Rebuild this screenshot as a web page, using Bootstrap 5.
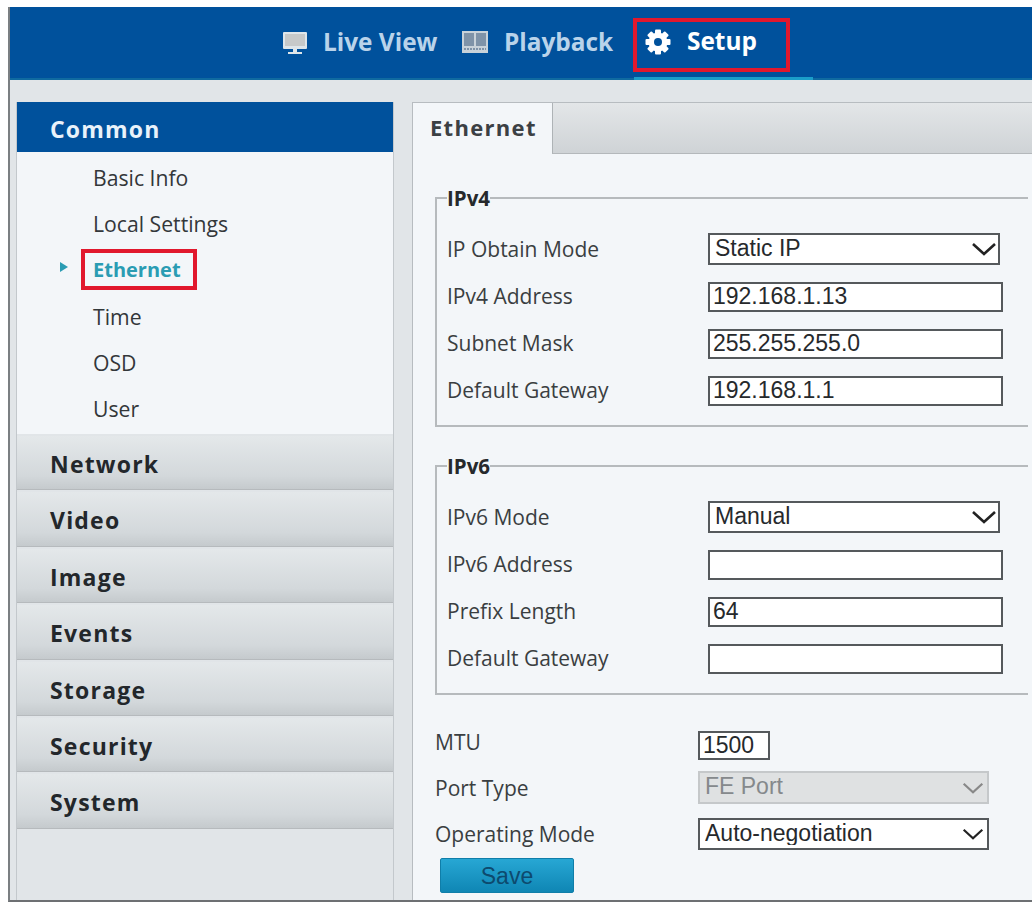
<!DOCTYPE html>
<html lang="en">
<head>
  <meta charset="UTF-8">
  <meta name="viewport" content="width=device-width, initial-scale=1">
  <title>Ethernet Setup</title>
  <link href="https://cdn.jsdelivr.net/npm/bootstrap@5.3.3/dist/css/bootstrap.min.css" rel="stylesheet">
  <style>
    html, body { height: 100%; background: #fff; overflow: hidden; }
    body { font-family: "Open Sans", "Noto Sans", sans-serif; color: #2b2f33; }
    .cam-frame { margin: 7px 0 0 8px; height: 895px; border-left: 2px solid #7b7f82; border-bottom: 2px solid #6d7073; background: #e1e5e8; overflow: hidden; }

    .cam-top { height: 73px; background: #00519c; padding-left: 270px; box-shadow: inset 0 -2px 0 #0f6aa0; }
    .cam-link { height: 73px; padding-bottom: 3px; font-size: 24.4px; font-weight: 700; color: #b9d3ea; text-decoration: none; }
    .cam-link:hover { color: #b9d3ea; }
    .cam-link svg { flex: none; }
    .cam-live { width: 182px; gap: 16px; padding-left: 3px; }
    .cam-live svg { margin-top: 1px; }
    .cam-play { width: 172px; gap: 16px; }
    .cam-setup { width: 179px; gap: 16px; padding-left: 11px; padding-bottom: 1px; color: #fff; border-bottom: 3px solid #1b9ec9; }
    .cam-setup:hover { color: #fff; }
    .cam-mark { position: absolute; border: 4px solid #e1182d; pointer-events: none; }
    .mark-setup { left: -1px; top: 11px; width: 157px; height: 54px; }
    .mark-eth { left: -12px; top: -6px; width: 116px; height: 41px; }

    .cam-body { padding: 22px 0 0 6px; gap: 18px; height: 820px; }
    .cam-side { width: 378px; flex: none; border-right: 1px solid #c3c8cc; border-left: 1px solid #c3c8cc; }
    .side-head { display: flex; align-items: center; padding-left: 33px; font-size: 23px; font-weight: 700; letter-spacing: 1.2px; color: #23272b; }
    .side-head.is-open { height: 50px; padding-top: 5px; background: #00519c; color: #e9f2fa; }
    .side-head.is-shut { height: 54.4px; padding-top: 3px; margin-top: 2px; background: linear-gradient(#e4e8ea, #d3d8db 75%, #c5cacd); border-bottom: 1px solid #b6babd; }
    .side-list { background: #f3f6f9; height: 282px; padding: 3px 0 0 76px; margin: 0; list-style: none; }
    .side-list li { height: 46.2px; display: flex; align-items: center; font-size: 21.2px; color: #33373a; position: relative; }
    .side-list li.is-on { color: #2a9cb3; font-weight: 700; font-size: 20px; }
    .side-arrow { position: absolute; left: -33px; top: 15px; width: 0; height: 0; border-left: 8px solid #2a9cb3; border-top: 5px solid transparent; border-bottom: 5px solid transparent; }
    .eth-text { position: relative; }

    .cam-main { width: 620px; flex: none; background: #f3f6f9; border: 1px solid #b7bcc0; border-right: 0; height: 800px; }
    .tab-row { height: 51px; }
    .tab-on { width: 139px; padding-left: 17px; padding-bottom: 2px; display: flex; align-items: center; font-size: 22px; font-weight: 700; letter-spacing: 1.3px; color: #3b4044; }
    .tab-rest { flex: 1; background: linear-gradient(#e3e6e8, #cfd3d6); border-left: 1px solid #aeb3b6; border-bottom: 1px solid #b4b8bb; }

    .net-set { margin: 32px 4px 27px 22px; padding: 16px 0 11px 10px; border: 2px solid #b6babd; border-right: 0; }
    .net-set + .net-set { margin-top: 0; margin-bottom: 25px; }
    .net-set legend { float: none; width: auto; margin: 0; padding: 0; font-size: 20.5px; line-height: 24px; font-weight: 700; color: #26292c; }
    .net-row { height: 47px; }
    .net-label { width: 261px; flex: none; font-size: 21px; color: #3a3e41; }
    .net-foot { padding-left: 22px; margin-top: 28px; }
    .foot-row { height: 44px; }
    .foot-row:nth-child(3) { height: 47px; }
    .foot-row .net-label { width: 263px; }
    .foot-row:first-child .net-label { margin-bottom: 5px; }

    .cam-input, .cam-select { font-family: "Liberation Sans", Arial, sans-serif; font-size: 23px; color: #26292c; background-color: #fff; border: 2px solid #55595c; border-radius: 0; box-shadow: none; }
    .cam-input { height: 30px; width: 295px; padding: 0 3px; line-height: 26px; }
    .cam-input.is-short { width: 72px; height: 29px; }
    .cam-select { height: 32px; width: 292px; margin-bottom: 1px; padding: 0 30px 3px 5px; line-height: 24px; appearance: none; background-repeat: no-repeat; background-position: right 1px center; background-size: 26px 16px; background-image: url("data:image/svg+xml,%3Csvg xmlns='http://www.w3.org/2000/svg' viewBox='0 0 26 16'%3E%3Cpath d='M2 3l11 10 11-10' fill='none' stroke='%23222' stroke-width='2.6'/%3E%3C/svg%3E"); }
    .cam-select.is-low { width: 291px; background-position: right 3px center; background-size: 22px 14px; }
    .cam-select:disabled { opacity: 1; height: 33px; margin-bottom: 3px; color: #85898c; background-color: #dfe1e2; border-color: #c5c8ca; background-image: url("data:image/svg+xml,%3Csvg xmlns='http://www.w3.org/2000/svg' viewBox='0 0 26 16'%3E%3Cpath d='M2 3l11 10 11-10' fill='none' stroke='%23888' stroke-width='2.6'/%3E%3C/svg%3E"); }
    .btn-save { width: 134px; height: 35px; margin: 0 0 0 5px; padding: 0 0 3px; display: block; font-family: "Liberation Sans", Arial, sans-serif; font-size: 23px; color: #0d4a6e; background: linear-gradient(#27a7d4, #0f86b4); border: 1px solid #0f7ea9; border-radius: 2px; }
  </style>
</head>
<body>

<div class="cam-frame">
  <nav class="cam-top d-flex">
    <a class="cam-link cam-live d-flex align-items-center" href="#">
      <svg width="24" height="24" viewBox="0 0 24 24"><rect x="0" y="1" width="24" height="17" rx="1" fill="#dfe6ea"/><rect x="2" y="3" width="20" height="12" fill="#c7c9c9"/><rect x="10" y="18" width="4" height="3" fill="#dfe6ea"/><rect x="5" y="21" width="14" height="2" fill="#dfe6ea"/></svg>
      Live View
    </a>
    <a class="cam-link cam-play d-flex align-items-center" href="#">
      <svg width="26" height="22" viewBox="0 0 26 22"><rect width="26" height="22" fill="#c9d2d9"/><rect x="2" y="2" width="10" height="13" fill="#7f93a8"/><rect x="14" y="2" width="10" height="13" fill="#7f93a8"/><path d="M2 18h22" stroke="#7f93a8" stroke-width="2" stroke-dasharray="2 1"/></svg>
      Playback
    </a>
    <a class="cam-link cam-setup d-flex align-items-center position-relative" href="#">
      <svg width="26" height="26" viewBox="0 0 26 26">
        <g fill="#fff">
          <circle cx="13" cy="13" r="9.500"/>
          <rect x="10" y="0.500" width="6" height="25" rx="1"/>
          <rect x="10" y="0.500" width="6" height="25" rx="1" transform="rotate(45 13 13)"/>
          <rect x="10" y="0.500" width="6" height="25" rx="1" transform="rotate(90 13 13)"/>
          <rect x="10" y="0.500" width="6" height="25" rx="1" transform="rotate(135 13 13)"/>
        </g>
        <circle cx="13" cy="13" r="4" fill="#00519c"/>
      </svg>
      Setup
      <span class="cam-mark mark-setup"></span>
    </a>
  </nav>

  <div class="cam-body d-flex">
    <aside class="cam-side">
      <div class="side-head is-open">Common</div>
      <ul class="side-list">
        <li>Basic Info</li>
        <li>Local Settings</li>
        <li class="is-on"><span class="side-arrow"></span><span class="eth-text">Ethernet<span class="cam-mark mark-eth"></span></span></li>
        <li>Time</li>
        <li>OSD</li>
        <li>User</li>
      </ul>
      <div class="side-head is-shut">Network</div>
      <div class="side-head is-shut">Video</div>
      <div class="side-head is-shut">Image</div>
      <div class="side-head is-shut">Events</div>
      <div class="side-head is-shut">Storage</div>
      <div class="side-head is-shut">Security</div>
      <div class="side-head is-shut">System</div>
    </aside>

    <main class="cam-main">
      <div class="tab-row d-flex">
        <div class="tab-on">Ethernet</div>
        <div class="tab-rest"></div>
      </div>

      <fieldset class="net-set">
        <legend>IPv4</legend>
        <div class="net-row d-flex align-items-center">
          <span class="net-label">IP Obtain Mode</span>
          <select class="cam-select"><option>Static IP</option></select>
        </div>
        <div class="net-row d-flex align-items-center">
          <span class="net-label">IPv4 Address</span>
          <input class="cam-input" value="192.168.1.13">
        </div>
        <div class="net-row d-flex align-items-center">
          <span class="net-label">Subnet Mask</span>
          <input class="cam-input" value="255.255.255.0">
        </div>
        <div class="net-row d-flex align-items-center">
          <span class="net-label">Default Gateway</span>
          <input class="cam-input" value="192.168.1.1">
        </div>
      </fieldset>

      <fieldset class="net-set">
        <legend>IPv6</legend>
        <div class="net-row d-flex align-items-center">
          <span class="net-label">IPv6 Mode</span>
          <select class="cam-select"><option>Manual</option></select>
        </div>
        <div class="net-row d-flex align-items-center">
          <span class="net-label">IPv6 Address</span>
          <input class="cam-input" value="">
        </div>
        <div class="net-row d-flex align-items-center">
          <span class="net-label">Prefix Length</span>
          <input class="cam-input" value="64">
        </div>
        <div class="net-row d-flex align-items-center">
          <span class="net-label">Default Gateway</span>
          <input class="cam-input" value="">
        </div>
      </fieldset>

      <div class="net-foot">
        <div class="foot-row d-flex align-items-center">
          <span class="net-label">MTU</span>
          <input class="cam-input is-short" value="1500">
        </div>
        <div class="foot-row d-flex align-items-center">
          <span class="net-label">Port Type</span>
          <select class="cam-select is-low" disabled><option>FE Port</option></select>
        </div>
        <div class="foot-row d-flex align-items-center">
          <span class="net-label">Operating Mode</span>
          <select class="cam-select is-low"><option>Auto-negotiation</option></select>
        </div>
        <button class="btn-save" type="button">Save</button>
      </div>
    </main>
  </div>
</div>

<script src="https://cdn.jsdelivr.net/npm/bootstrap@5.3.3/dist/js/bootstrap.bundle.min.js"></script>
</body>
</html>
